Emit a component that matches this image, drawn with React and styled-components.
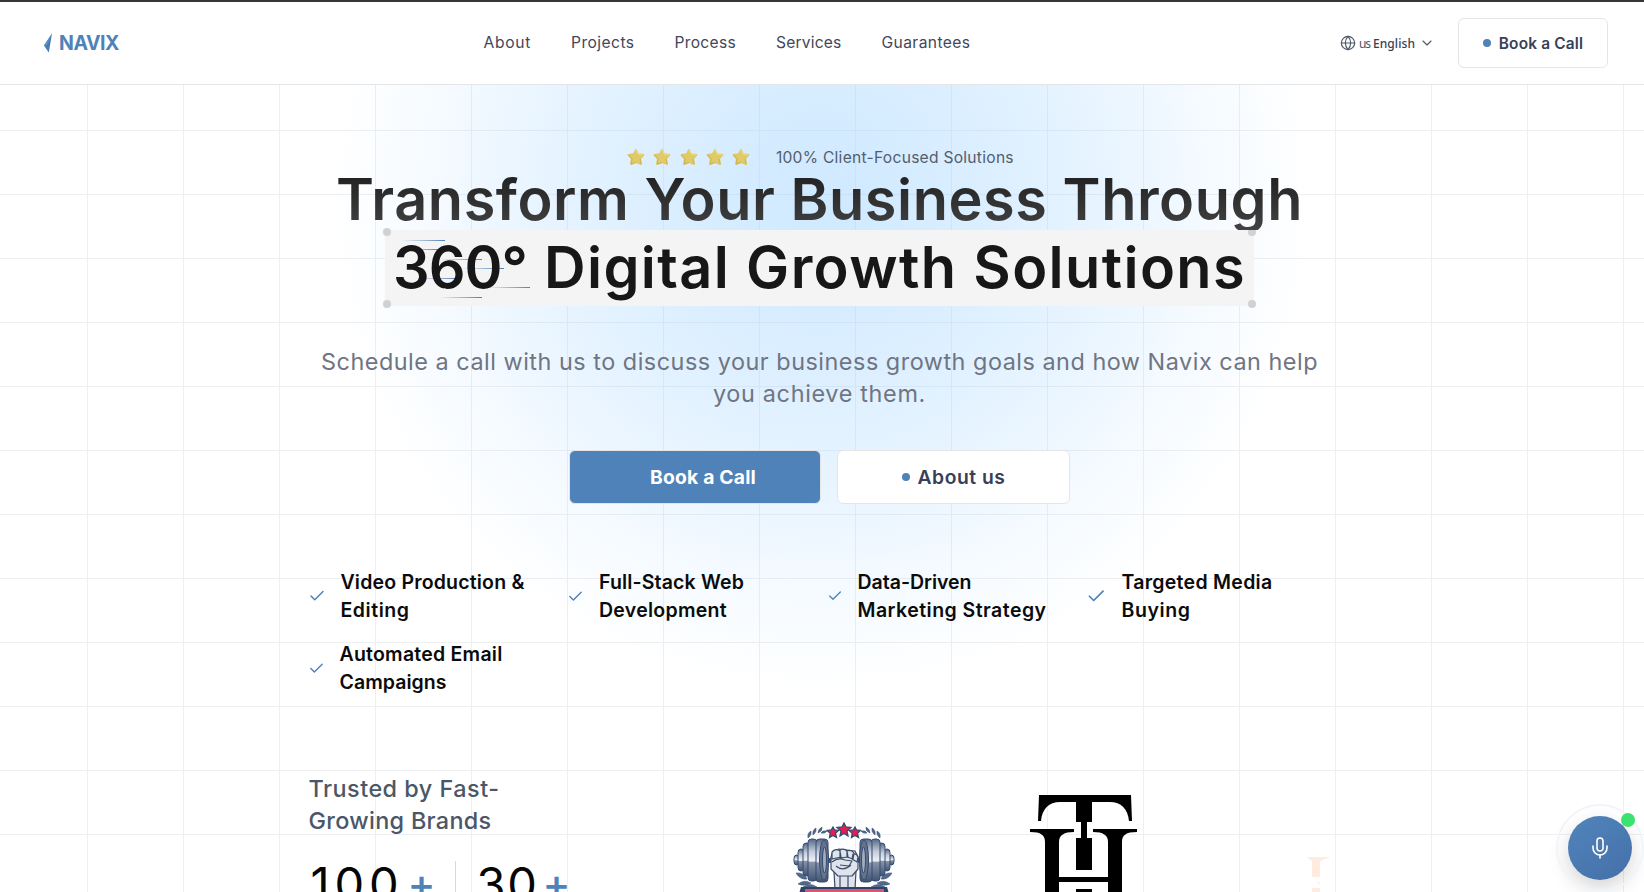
import React, { useLayoutEffect, useRef } from "react";
import styled, { createGlobalStyle } from "styled-components";
import { Check, ChevronDown, Globe, Mic } from "lucide-react";

const blue = "#4f82b8";

const GlobalStyle = createGlobalStyle`
  * { box-sizing: border-box; }
  body {
    margin: 0;
    background: #fff;
    font-family: Inter, "Liberation Sans", sans-serif;
    overflow: hidden;
  }
  h1, p { margin: 0; }
  a { color: inherit; text-decoration: none; }
  button { font: inherit; cursor: pointer; }
`;

const Line = styled.span`
  display: inline-block;
  width: ${(p) => p.$width}px;
  white-space: nowrap;
  text-align: left;
`;

/* Tracks a single line of text so that it fills the given measure. */
function Tracked({ width, children }) {
  const ref = useRef(null);
  useLayoutEffect(() => {
    const el = ref.current;
    el.style.letterSpacing = "0px";
    const range = document.createRange();
    range.selectNodeContents(el);
    const natural = range.getBoundingClientRect().width;
    el.style.letterSpacing = `${(width - natural) / children.length}px`;
  }, [width, children]);
  return <Line ref={ref} $width={width}>{children}</Line>;
}

const Page = styled.div`
  height: 892px;
  overflow: hidden;
  position: relative;
  display: flex;
  flex-direction: column;
`;

const Header = styled.header`
  height: 85px;
  flex: none;
  display: grid;
  grid-template-columns: 483.5px 1fr auto;
  align-items: center;
  padding: 0 36px 0 0;
  background: #fff;
  border-top: 2px solid #373536;
  border-bottom: 1px solid #e4e5e7;
`;

const Brand = styled.a`
  display: flex;
  align-items: center;
  gap: 6px;
  padding-left: 43px;
  color: ${blue};
  font-size: 19.5px;
  font-weight: 700;
`;

const Nav = styled.nav`
  display: flex;
  gap: 40px;
  padding-bottom: 1px;
  font-size: 15.6px;
  color: #42475a;
`;

const HeaderActions = styled.div`
  display: flex;
  align-items: center;
`;

const Language = styled.button`
  display: flex;
  align-items: center;
  border: 0;
  background: none;
  padding: 0;
  margin-right: 23px;
  color: #4b5563;
  font-family: "Noto Sans", sans-serif;
  font-size: 12px;

  > span { margin-left: 3px; }
  > strong { margin: 0 4px 0 3px; font-weight: 500; color: #374151; }
`;

const Button = styled.a`
  display: flex;
  align-items: center;
  justify-content: center;
  gap: 8px;
  width: ${(p) => p.$width}px;
  height: ${(p) => p.$height}px;
  padding-left: ${(p) => (p.$primary ? 16 : 0)}px;
  border: 1px solid #e5e5e7;
  border-radius: 6px;
  background: ${(p) => (p.$primary ? blue : "#fff")};
  color: ${(p) => (p.$primary ? "#fff" : "#374057")};
  font-size: ${(p) => p.$size}px;
  font-weight: ${(p) => (p.$primary ? 700 : 600)};
`;

const Dot = styled.i`
  width: 8px;
  height: 8px;
  border-radius: 50%;
  background: ${blue};
`;

const Hero = styled.main`
  flex: 1;
  min-height: 0;
  padding: 60px 5px 0 0;
  display: flex;
  flex-direction: column;
  align-items: center;
  background:
    radial-gradient(circle 490px at 822px 115px, rgba(159, 211, 255, 0.5) 0%, rgba(159, 211, 255, 0.39) 30%, rgba(159, 211, 255, 0.23) 60%, rgba(159, 211, 255, 0.1) 80%, rgba(159, 211, 255, 0) 100%),
    linear-gradient(90deg, #eeeff0 1px, transparent 1px) 87px 0 / 96px 64px,
    linear-gradient(#eeeff0 1px, transparent 1px) 0 45px / 96px 64px;

  > * { flex: none; }
`;

const Rating = styled.div`
  height: 24px;
  display: flex;
  align-items: center;
  gap: 26px;
  padding-left: 2px;
  font-size: 15.6px;
  color: #535d6b;
`;

const Stars = styled.div`
  display: flex;
  gap: 8.2px;
`;

const Headline = styled.h1`
  display: flex;
  flex-direction: column;
  align-items: center;
  font-size: 57.6px;
  font-weight: 600;
`;

const HeadlineTop = styled.span`
  position: relative;
  z-index: 1;
  height: 61px;
  line-height: 61px;
  color: transparent;
  background: linear-gradient(#222 10%, #424242 100%);
  background-clip: text;
  -webkit-background-clip: text;
`;

const Highlight = styled.span`
  position: relative;
  display: flex;
  gap: 17px;
  width: 869px;
  height: 76px;
  padding-left: 8px;
  line-height: 74px;
  background: #f4f4f5;
  color: #171717;

  > span { position: relative; }
`;

const Handle = styled.i`
  position: absolute;
  width: 8px;
  height: 8px;
  border-radius: 50%;
  background: #cfd1d3;
  ${(p) => p.$v}: -2px;
  ${(p) => p.$h}: -2px;
`;

const Beam = styled.i`
  position: absolute;
  left: ${(p) => p.$x}px;
  top: ${(p) => p.$y}px;
  width: 43px;
  height: 1px;
  background: linear-gradient(90deg, transparent, ${blue});
`;

const Lead = styled.p`
  margin-top: 39.5px;
  display: flex;
  flex-direction: column;
  align-items: center;
  font-size: 23.4px;
  line-height: 32px;
  color: #6f7582;
`;

const Actions = styled.div`
  display: flex;
  gap: 16px;
  margin-top: 40.5px;
`;

const Features = styled.ul`
  list-style: none;
  margin: 64px 0 0;
  padding: 0;
  width: 1024px;
  display: grid;
  grid-template-columns: repeat(4, 235.5px);
  column-gap: 24px;
  row-gap: 16px;
`;

const Feature = styled.li`
  display: flex;
  align-items: center;
  gap: 15px;
  font-size: 19.5px;
  line-height: 28px;
  font-weight: 600;
  color: #0b0b0c;

  svg { flex: none; color: ${blue}; }
`;

const Lines = styled.div`
  display: flex;
  flex-direction: column;
`;

const Trusted = styled.section`
  width: 1024px;
  margin-top: 76.5px;
  display: flex;
  align-items: flex-start;
`;

const TrustedIntro = styled.div`
  width: 260px;
  flex: none;
  padding-left: 1px;
  font-size: 23.4px;
  line-height: 32px;
  font-weight: 500;
  color: #4b5768;
`;

const Stats = styled.div`
  display: flex;
  margin-top: 24px;
  font-size: 47px;
  line-height: 46px;
  font-weight: 400;
  color: #050505;
`;

const Stat = styled.div`
  display: flex;
  gap: 4px;
  padding: ${(p) => (p.$divided ? "0 0 0 21px" : "0 20px 0 2px")};
  border-left: ${(p) => (p.$divided ? "1px solid #d4d8df" : "0")};
`;

const Plus = styled.span`
  width: 27px;
  font-size: 42px;
  font-weight: 500;
  color: ${blue};
`;

const Logos = styled.div`
  display: flex;
  align-items: flex-start;
  padding-left: 225.5px;

  svg { flex: none; }
`;

const LogoSlot = styled.div`
  margin: ${(p) => p.$top}px ${(p) => p.$after}px 0 0;
`;

const Voice = styled.button`
  position: absolute;
  left: 1568px;
  top: 816px;
  width: 64px;
  height: 64px;
  display: grid;
  place-items: center;
  border: 0;
  border-radius: 50%;
  color: #fff;
  background: linear-gradient(145deg, #5085bb, #456fa8);
  box-shadow: 0 8px 20px rgba(0, 0, 0, 0.17);

  &::before {
    content: "";
    position: absolute;
    inset: -12px;
    border: 2px solid #f0f5fa;
    border-radius: 50%;
  }
`;

const Online = styled.i`
  position: absolute;
  right: -3px;
  top: -3px;
  width: 14px;
  height: 14px;
  border-radius: 50%;
  background: #3ce270;
`;

function BrandMark() {
  return (
    <svg width="10" height="20" viewBox="0 0 10 20">
      <path d="M9 0.5 5.8 19.5 1 12.5Z" fill="#477bb2" />
      <path d="M9 0.5 1 12.5 4 12Z" fill="#5c91c4" />
    </svg>
  );
}

function Star() {
  return (
    <svg width="18" height="18" viewBox="0 0 18 18">
      <path d="M9 1.8 11.1 6.1 16.5 6.9 13.1 10.7 14.2 16.1 9 14.2 4 16.1 4.8 10.7 1.4 6.9 6.7 6.1Z" fill="#e1cb68" stroke="#dfc765" strokeWidth="1.7" strokeLinejoin="round" />
      <path d="M4.2 16 5.1 10.8 1.6 7.2M9 14.4 4.2 16.2M14 16 13.2 11" fill="none" stroke="#c8ae51" strokeWidth=".8" />
      <path d="M9 2 11.2 6.4 16 7.1" fill="none" stroke="#f0de7d" />
    </svg>
  );
}

const plates = [
  [1, 33, 5, 10], [5, 27, 6, 22], [10, 21, 7, 33], [15, 17, 9, 42], [23, 17, 12, 43],
];

function Dumbbell() {
  return (
    <g stroke="#344b70" strokeWidth="1">
      {plates.map(([x, y, w, h]) => (
        <rect key={x} x={x} y={y} width={w} height={h} rx="3.5" fill="url(#steel)" />
      ))}
      <ellipse cx="31" cy="38" rx="4.5" ry="20" fill="#65728a" />
      <ellipse cx="31.5" cy="38" rx="2" ry="13" fill="#a2acbd" />
    </g>
  );
}

function Laurel() {
  return (
    <g fill="#53698a" stroke="#344b70" strokeWidth=".5">
      <path d="M15 16q-1-5 3-7 1 4-3 7M20 13q-1-5 3-7 1 4-3 7M25 11q0-4 4-6 1 4-4 6M28 11q1-3 6-2-2 3-6 2M3 51q8-1 11 6-7 1-11-6M5 62q6-5 13-1-6 4-13 1M10 65q7-5 14 0-6 4-14 0" />
    </g>
  );
}

function GymLogo() {
  return (
    <svg width="102" height="72" viewBox="0 0 102 72">
      <defs>
        <linearGradient id="steel" x1="0" y1="0" x2="0" y2="1">
          <stop offset="0" stopColor="#536987" />
          <stop offset=".3" stopColor="#c5cddb" />
          <stop offset=".52" stopColor="#eef1f6" />
          <stop offset=".56" stopColor="#8793aa" />
          <stop offset="1" stopColor="#405473" />
        </linearGradient>
      </defs>
      <Laurel />
      <g transform="translate(102 0) scale(-1 1)"><Laurel /></g>
      <path d="M34 36h34v5H34z" fill="#42577b" />
      <Dumbbell />
      <g transform="translate(102 0) scale(-1 1)"><Dumbbell /></g>
      <g fill="#dfe3eb" stroke="#3c4c69" strokeWidth="1.2" strokeLinejoin="round">
        <path d="M41 50 42 67H62L63 49Z" />
        <path d="M38 35 40 29 46 27 62 29 65 35 65 47 59 54 45 54 38 47Z" />
        <path d="M39 30q4-4 8-1l1 6-9 2zM47 28q4-2 7 1l1 6-8 1zM54 29q4-2 7 2l-1 6-6-2zM60 32q4-1 5 3l-1 5-5-3zM39 40q6-5 13-2l7 1-3 5-9-1" />
        <path d="M47 54v11M55 54v11M43 44q7 6 15-1" fill="none" />
      </g>
      <g fill="#e31f4f" stroke="#354b70" strokeWidth="1.3">
        <path d="m51 1 2 4 5 .5-4 3.5 1 5-4-2.5-4 2.5 1-5-4-3.5 5-.5z" />
        <path d="m40 5 1.5 3 4 .4-3 3 1 4-3.5-2-3.5 2 .7-4-3-3 4-.4zM62 5l1.5 3 4 .4-3 3 1 4-3.5-2-3.5 2 .7-4-3-3 4-.4z" />
      </g>
      <path d="M8 65H94L96 72H6Z" fill="#304469" />
      <path d="M12 67H91V72H12Z" fill="#d95570" />
    </svg>
  );
}

function MonogramLogo() {
  return (
    <svg width="107" height="98" viewBox="0 0 107 98">
      <path d="M9 0H101L102 26H99C98 14 91 7 80 7H62V27H57V43H62V75H46V43H51V27H46V7H30C19 7 12 14 11 26H8Z" />
      <path d="M0 34H44V37C34 37 29 40 29 47V82H78V47C78 40 73 37 63 37V34H107V37C96 37 92 40 92 47V98H78V87H29V98H15V47C15 40 11 37 0 37Z" />
      <rect x="46" y="94" width="16" height="4" />
    </svg>
  );
}

function PaleLogo() {
  return (
    <svg width="24" height="36" viewBox="0 0 24 36" fill="#ffebe0">
      <path d="M0 0H22V1Q15 2 13 5V20H5V5Q4 2 0 1Z" />
      <circle cx="12" cy="26" r="1.5" opacity=".6" />
      <rect x="5" y="31" width="8" height="5" />
    </svg>
  );
}

const links = [["About", 47.5], ["Projects", 63.5], ["Process", 61.5], ["Services", 65.5], ["Guarantees", 89]];

const beams = [[17, 10], [12, 19], [54, 29], [76, 38], [30, 48], [102, 57], [54, 67]];

const features = [
  { icon: 18, lines: [["Video Production &", 184], ["Editing", 69]] },
  { icon: 17, lines: [["Full-Stack Web", 145], ["Development", 128]] },
  { icon: 16, lines: [["Data-Driven", 114], ["Marketing Strategy", 189]] },
  { icon: 20.5, lines: [["Targeted Media", 151], ["Buying", 69]] },
  { icon: 17, lines: [["Automated Email", 163], ["Campaigns", 107]] },
];

export default function App() {
  return (
    <Page>
      <GlobalStyle />
      <Header>
        <Brand href="#"><BrandMark /><Tracked width={60}>NAVIX</Tracked></Brand>
        <Nav>
          {links.map(([label, width]) => (
            <a key={label} href="#"><Tracked width={width}>{label}</Tracked></a>
          ))}
        </Nav>
        <HeaderActions>
          <Language>
            <Globe size={16} strokeWidth={1.7} />
            <span><Tracked width={11}>us</Tracked></span>
            <strong><Tracked width={42}>English</Tracked></strong>
            <ChevronDown size={16} strokeWidth={1.6} />
          </Language>
          <Button href="#" $width={150} $height={50} $size={15.4}>
            <Dot /><Tracked width={84.5}>Book a Call</Tracked>
          </Button>
        </HeaderActions>
      </Header>

      <Hero>
        <Rating>
          <Stars>{[0, 1, 2, 3, 4].map((n) => <Star key={n} />)}</Stars>
          <Tracked width={238}>100% Client-Focused Solutions</Tracked>
        </Rating>
        <Headline>
          <HeadlineTop><Tracked width={967}>Transform Your Business Through</Tracked></HeadlineTop>
          <Highlight>
            {beams.map(([x, y]) => <Beam key={y} $x={x} $y={y} />)}
            <Handle $v="top" $h="left" />
            <Handle $v="top" $h="right" />
            <Handle $v="bottom" $h="left" />
            <Handle $v="bottom" $h="right" />
            <Tracked width={134}>360°</Tracked>
            <Tracked width={702}>Digital Growth Solutions</Tracked>
          </Highlight>
        </Headline>
        <Lead>
          <Tracked width={997}>Schedule a call with us to discuss your business growth goals and how Navix can help</Tracked>
          <Tracked width={213}>you achieve them.</Tracked>
        </Lead>
        <Actions>
          <Button href="#" $primary $width={252} $height={54} $size={19.3}>
            <Tracked width={106}>Book a Call</Tracked>
          </Button>
          <Button href="#" $width={233} $height={54} $size={19.3}>
            <Dot /><Tracked width={88}>About us</Tracked>
          </Button>
        </Actions>
        <Features>
          {features.map(({ icon, lines }) => (
            <Feature key={lines[0][0]}>
              <Check size={icon} strokeWidth={2} />
              <Lines>
                {lines.map(([text, width]) => <Tracked key={text} width={width}>{text}</Tracked>)}
              </Lines>
            </Feature>
          ))}
        </Features>
        <Trusted>
          <TrustedIntro>
            <Lines>
              <Tracked width={191}>Trusted by Fast-</Tracked>
              <Tracked width={183}>Growing Brands</Tracked>
            </Lines>
            <Stats>
              <Stat><Tracked width={93}>100</Tracked><Plus>+</Plus></Stat>
              <Stat $divided><Tracked width={62}>30</Tracked><Plus>+</Plus></Stat>
            </Stats>
          </TrustedIntro>
          <Logos>
            <LogoSlot $top={49.5} $after={135}><GymLogo /></LogoSlot>
            <LogoSlot $top={22.5} $after={170}><MonogramLogo /></LogoSlot>
            <LogoSlot $top={84.5} $after={0}><PaleLogo /></LogoSlot>
          </Logos>
        </Trusted>
      </Hero>

      <Voice aria-label="Voice assistant">
        <Mic size={24} strokeWidth={1.6} />
        <Online />
      </Voice>
    </Page>
  );
}
